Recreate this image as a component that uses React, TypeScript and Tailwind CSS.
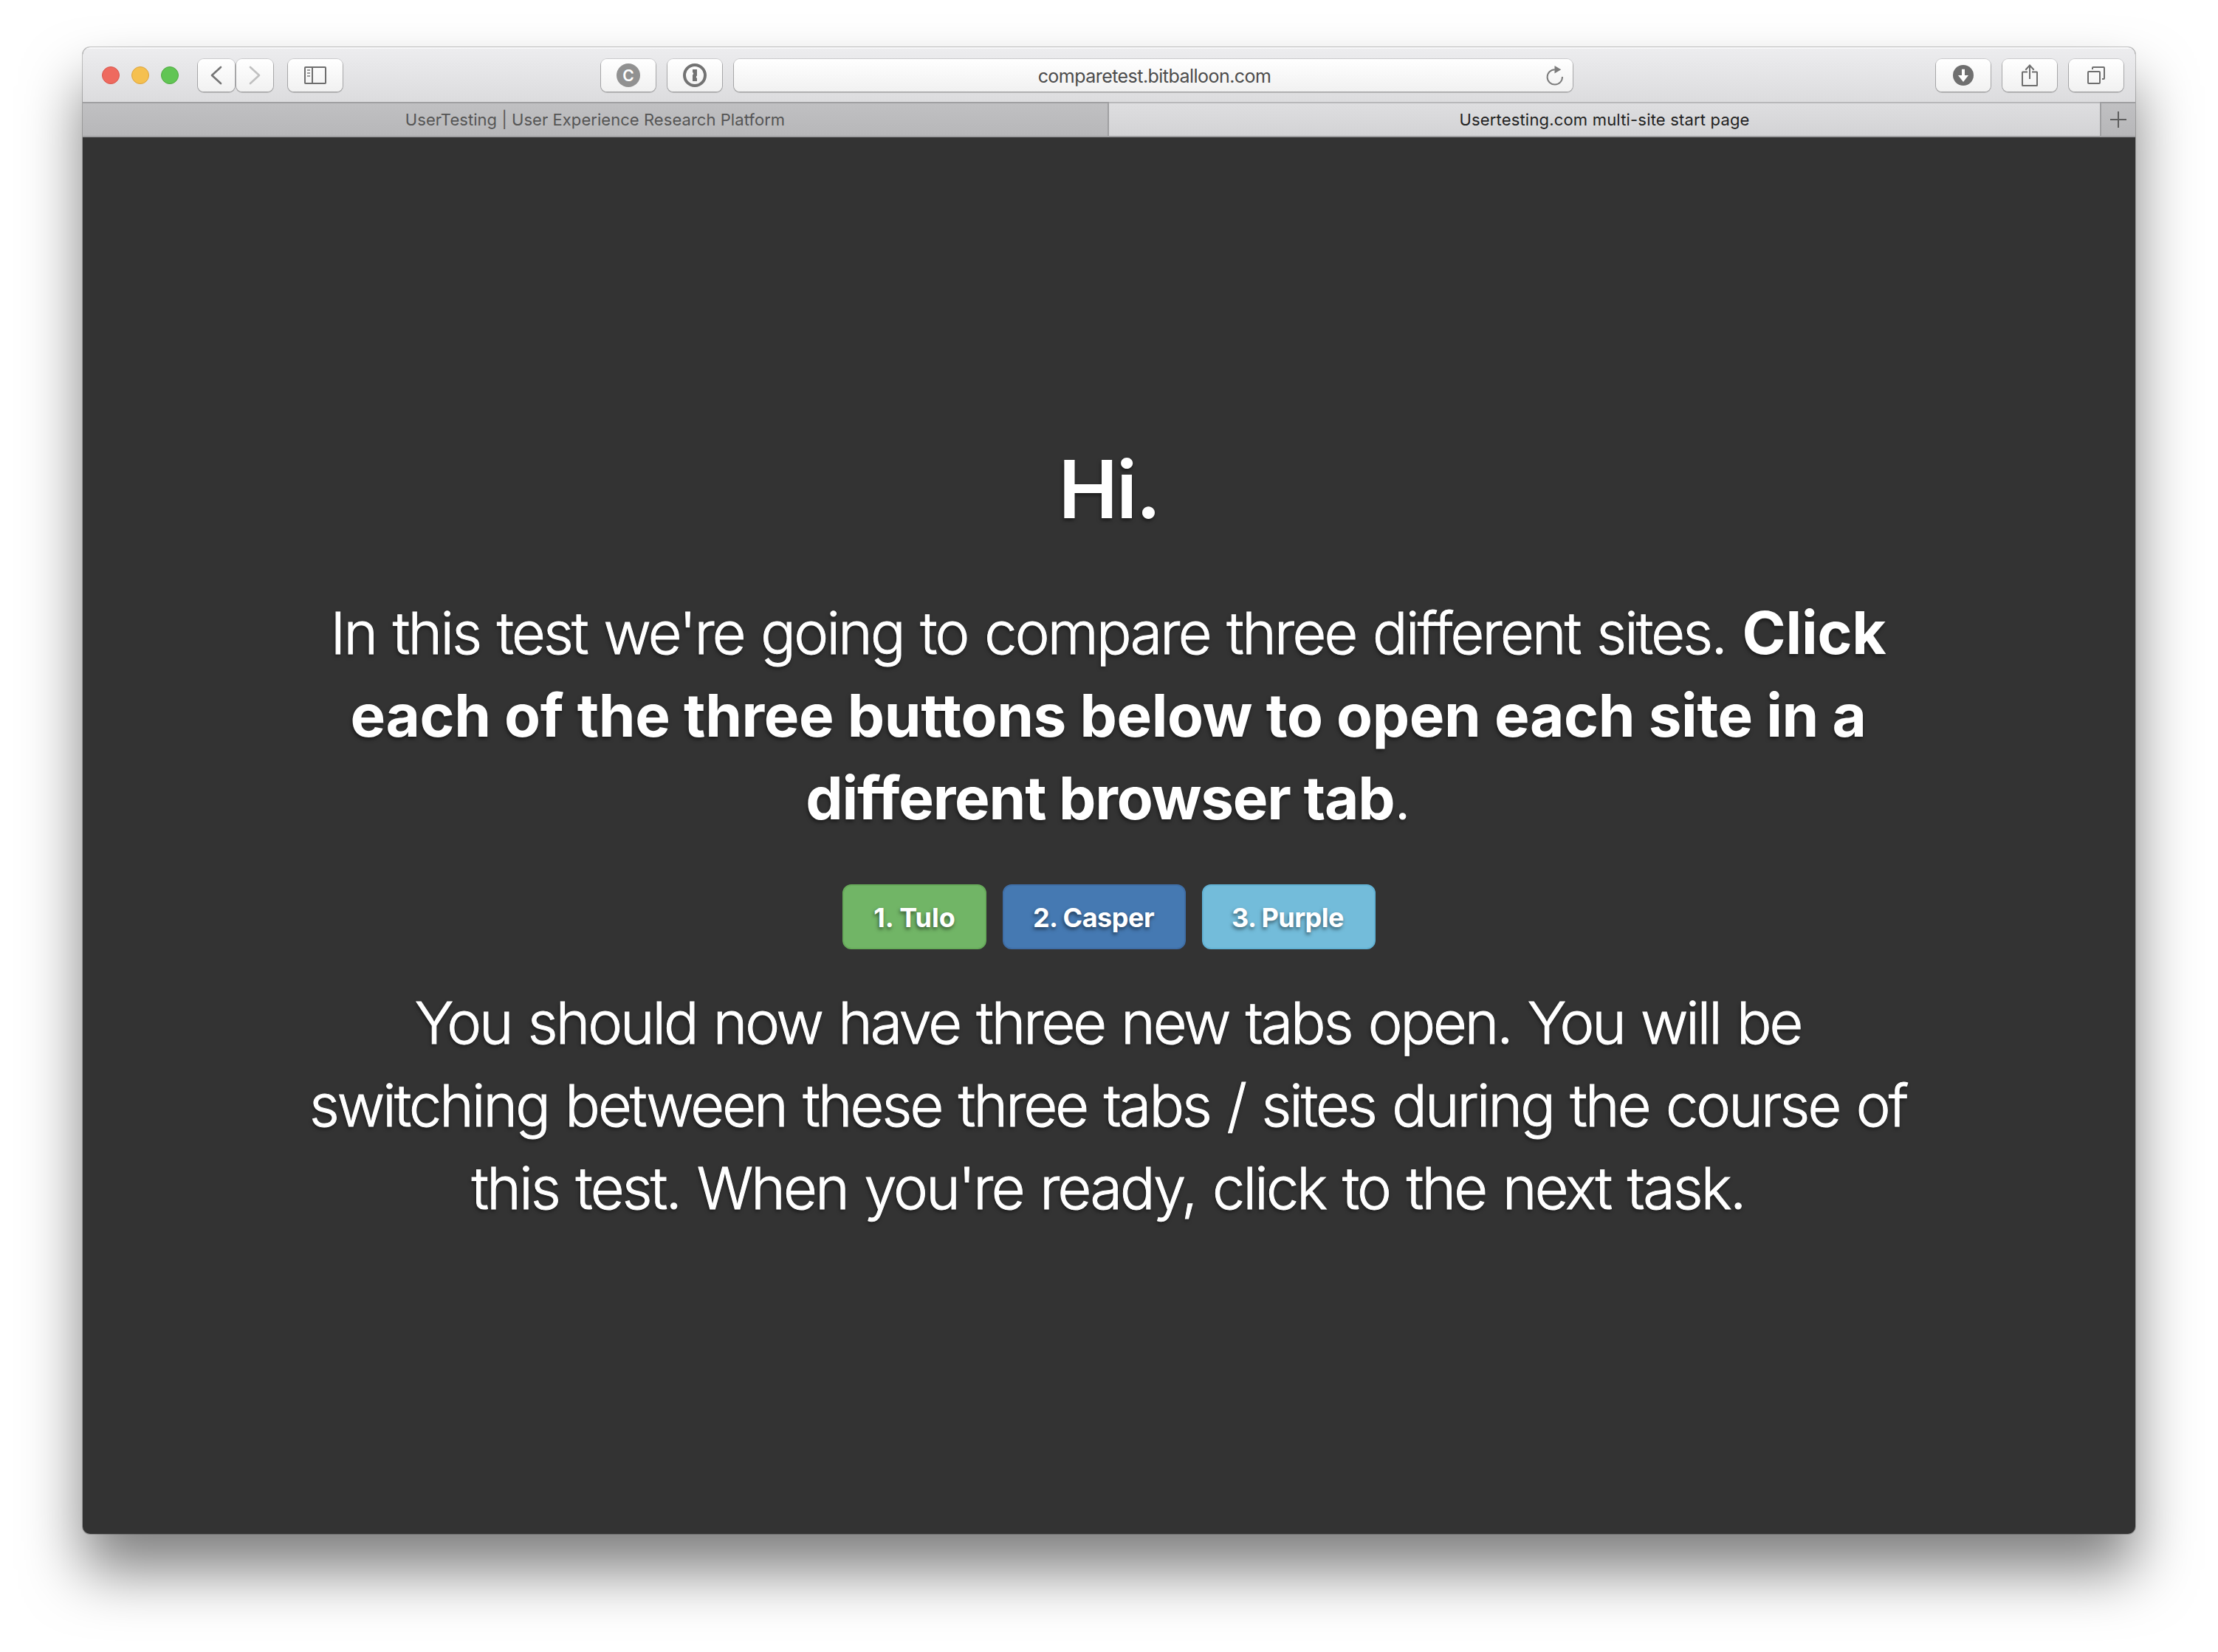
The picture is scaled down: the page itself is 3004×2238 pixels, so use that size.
import type { ReactNode } from "react";

function ToolbarButton({ className = "w-[74px]", children }: { className?: string; children: ReactNode }) {
  return (
    <div
      className={`flex h-11 shrink-0 items-center justify-center rounded-[8px] bg-linear-to-b from-white to-[#f1f1f1] shadow-[0_0_0_1px_rgba(0,0,0,0.13),0_1px_0_1px_rgba(0,0,0,0.16)] ${className}`}
    >
      {children}
    </div>
  );
}

function Chevron({ points, color }: { points: string; color: string }) {
  return (
    <svg width="50" height="44" viewBox="0 0 50 44" fill="none" stroke={color} strokeWidth="2.6" strokeLinecap="round" strokeLinejoin="round">
      <polyline points={points} />
    </svg>
  );
}

function SidebarIcon() {
  return (
    <svg width="30" height="24" viewBox="0 0 30 24" fill="none" stroke="#6e6e6e" strokeWidth="2">
      <rect x="1" y="1" width="28" height="22" rx="0.8" />
      <path d="M11 1v22" />
      <path d="M4 5h4M4 9h4M4 13h4" stroke="#9a9a9a" />
    </svg>
  );
}

function KeyholeIcon() {
  return (
    <svg width="32" height="32" viewBox="0 0 32 32" fill="none">
      <circle cx="16" cy="16" r="14" stroke="#727272" strokeWidth="4" />
      <path d="M13 8h6v8.5a1.8 1.8 0 0 0 0 3.4V24h-6v-8.5a1.8 1.8 0 0 0 0-3.4z" fill="#727272" />
    </svg>
  );
}

function ReloadIcon() {
  return (
    <svg width="24" height="28" viewBox="0 0 24 28" fill="none">
      <path d="M22 16A10.2 10.2 0 1 1 11.8 6.2" stroke="#7c7c7c" strokeWidth="2" />
      <path d="M11.5 1v10.4l8.8-5.2z" fill="#7c7c7c" />
    </svg>
  );
}

function DownloadIcon() {
  return (
    <svg width="28" height="28" viewBox="0 0 28 28">
      <circle cx="14" cy="14" r="14" fill="#6f6f6f" />
      <path d="M12 5.8h4v8.1h5L14 23 7 13.9h5z" fill="#fff" />
    </svg>
  );
}

function ShareIcon() {
  return (
    <svg width="24" height="32" viewBox="0 0 24 32" fill="none" stroke="#6e6e6e" strokeWidth="2">
      <path d="M9 11.5H2.5A.5.5 0 0 0 2 12v17.5a.5.5 0 0 0 .5.5h19a.5.5 0 0 0 .5-.5V12a.5.5 0 0 0-.5-.5H15" />
      <path d="M12 21V2.5M6.3 8.8 12 2.6l5.7 6.2" />
    </svg>
  );
}

function TabsIcon() {
  return (
    <svg width="24" height="24" viewBox="0 0 24 24" fill="none" stroke="#6e6e6e" strokeWidth="2">
      <rect x="1" y="7" width="16" height="16" rx="1" />
      <path d="M7 4V2a1 1 0 0 1 1-1h14a1 1 0 0 1 1 1v14a1 1 0 0 1-1 1h-2" />
    </svg>
  );
}

function Toolbar() {
  return (
    <div className="flex h-[74px] items-center bg-linear-to-b from-[#ededef] to-[#dcdcde] pt-[2px] pr-4 pl-[26px] shadow-[inset_0_2px_0_rgba(255,255,255,0.6)]">
      <div className="flex gap-4">
        <div className="size-6 rounded-full border border-[#d8574d] bg-[#ee6a5f]" />
        <div className="size-6 rounded-full border border-[#dba440] bg-[#f5c04f]" />
        <div className="size-6 rounded-full border border-[#4fa941] bg-[#61c554]" />
      </div>
      <div className="ml-[26px] flex gap-[2px]">
        <ToolbarButton className="w-[50px]">
          <Chevron points="31,11 19,22 31,33" color="#757575" />
        </ToolbarButton>
        <ToolbarButton className="w-[50px]">
          <Chevron points="19,11 31,22 19,33" color="#c0c0c0" />
        </ToolbarButton>
      </div>
      <ToolbarButton className="ml-5 w-[74px]">
        <SidebarIcon />
      </ToolbarButton>
      <div className="ml-[350px] flex gap-4">
        <ToolbarButton>
          <span className="flex size-8 items-center justify-center rounded-full bg-[#919191] text-[21px] leading-none font-semibold text-white">C</span>
        </ToolbarButton>
        <ToolbarButton>
          <KeyholeIcon />
        </ToolbarButton>
        <ToolbarButton className="relative w-[1136px]">
          <span className="pt-[2px] pl-[3px] text-[25px] leading-none tracking-[-0.54px] text-[#4c4c4c]">comparetest.bitballoon.com</span>
          <span className="absolute right-[12px]">
            <ReloadIcon />
          </span>
        </ToolbarButton>
      </div>
      <div className="ml-auto flex gap-4">
        <ToolbarButton>
          <DownloadIcon />
        </ToolbarButton>
        <ToolbarButton>
          <ShareIcon />
        </ToolbarButton>
        <ToolbarButton>
          <TabsIcon />
        </ToolbarButton>
      </div>
    </div>
  );
}

function TabBar() {
  return (
    <div className="flex h-12 text-[22px] leading-none">
      <div className="flex w-[1390px] items-center justify-center border-y-2 border-r-2 border-y-[#a0a0a2] border-r-[#a0a0a2] bg-linear-to-b from-[#c0c0c2] to-[#b7b7b9] tracking-[0.05px] text-[#555]">
        UserTesting | User Experience Research Platform
      </div>
      <div className="flex flex-1 items-center justify-center border-y-2 border-t-[#b8b8ba] border-b-[#a0a0a2] bg-linear-to-b from-[#dedee0] to-[#d3d3d5] tracking-[0.18px] text-[#222]">
        Usertesting.com multi-site start page
      </div>
      <div className="flex w-12 items-center justify-center border-y-2 border-l-2 border-[#a0a0a2] bg-linear-to-b from-[#c0c0c2] to-[#b7b7b9]">
        <svg width="22" height="22" viewBox="0 0 22 22" stroke="#5e5e5e" strokeWidth="2">
          <path d="M11 0v22M0 11h22" />
        </svg>
      </div>
    </div>
  );
}

function SiteButton({ className, children }: { className: string; children: ReactNode }) {
  return (
    <button className={`flex h-[88px] items-center justify-center rounded-[12px] border-2 pt-[2px] text-[36px] leading-none font-bold [text-shadow:-1px_3px_5px_rgba(0,0,0,0.5)] ${className}`}>
      {children}
    </button>
  );
}

export default function App() {
  return (
    <div className="h-[2238px] w-[3004px] overflow-hidden bg-white px-28 pt-16 font-['Inter',sans-serif]">
      <div className="flex h-[2014px] flex-col overflow-hidden rounded-[10px] bg-[#333] shadow-[0_0_0_1px_rgba(0,0,0,0.22),0_50px_80px_rgba(0,0,0,0.5)]">
        <Toolbar />
        <TabBar />
        <main className="flex flex-1 flex-col items-center pt-[417px] text-center whitespace-nowrap text-white [text-shadow:-1px_3px_5px_rgba(0,0,0,0.5)]">
          <h1 className="text-[108px] leading-[120px] font-semibold tracking-[-2px]">Hi.</h1>
          <p className="mt-[78px] pr-[2px] text-[79px] leading-[112px] font-light">
            <span className="tracking-[-2.7px] [word-spacing:3px] [-webkit-text-stroke:1px_white]">In this test we're going to compare three different sites. </span>
            <b className="text-[80px] leading-none font-bold tracking-[-0.2px]">Click</b>
            <br />
            <b className="text-[80px] leading-none font-bold tracking-[-0.4px]">each of the three buttons below to open each site in a</b>
            <br />
            <b className="text-[80px] leading-none font-bold tracking-[-1.2px]">different browser tab</b>
            <span className="[-webkit-text-stroke:1px_white]">.</span>
          </p>
          <div className="mt-[61px] flex gap-[22px]">
            <SiteButton className="w-[195px] border-[#67ab5a] bg-[#71b566]">1. Tulo</SiteButton>
            <SiteButton className="w-[248px] border-[#3f6ea6] bg-[#4579b2] pr-[2px] tracking-[-0.5px]">2. Casper</SiteButton>
            <SiteButton className="w-[235px] border-[#62b2d4] bg-[#73bcda] pr-[3px] tracking-[-0.5px]">3. Purple</SiteButton>
          </div>
          <p className="mt-[43px] pr-[3px] text-[79px] leading-[112px] font-light [word-spacing:3px] [-webkit-text-stroke:1px_white]">
            <span className="tracking-[-3px]">You should now have three new tabs open. You will be</span>
            <br />
            <span className="tracking-[-2.85px]">switching between these three tabs / sites during the course of</span>
            <br />
            <span className="tracking-[-2.72px]">this test. When you're ready, click to the next task.</span>
          </p>
        </main>
      </div>
    </div>
  );
}
